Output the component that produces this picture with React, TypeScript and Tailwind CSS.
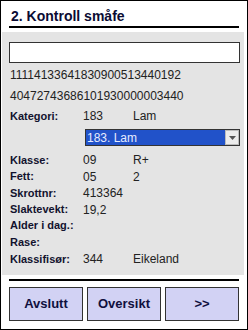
import React from 'react';

const rows = [
  { label: 'Klasse:', a: '09', b: 'R+' },
  { label: 'Fett:', a: '05', b: '2' },
  { label: 'Skrottnr:', a: '413364', b: '' },
  { label: 'Slaktevekt:', a: '19,2', b: '' },
  { label: 'Alder i dag.:', a: '', b: '' },
  { label: 'Rase:', a: '', b: '' },
  { label: 'Klassifisør:', a: '344', b: 'Eikeland' },
];

const Row = ({ label, a, b }: { label: string; a: string; b: string }) => (
  <div className="grid grid-cols-[73px_50px_1fr] h-[16.5px] items-center">
    <span className="text-[11px] font-bold text-[#12122e]">{label}</span>
    <span className="text-[12px] text-[#222]">{a}</span>
    <span className="text-[12px] text-[#222]">{b}</span>
  </div>
);

export default function App() {
  return (
    <div
      className="w-[248px] h-[330px] bg-white border border-black flex flex-col overflow-hidden"
      style={{ fontFamily: '"Liberation Sans", Arial, sans-serif' }}
    >
      {/* header */}
      <div className="px-[8px]">
        <div className="h-[27px] border-b-2 border-black pl-[2px] pt-[7px]">
          <h1 className="text-[14px] leading-[17px] font-bold text-[#0b0b33]">2. Kontroll småfe</h1>
        </div>
      </div>

      {/* form area */}
      <div className="mt-[4px] ml-[1px] mr-[3px] h-[243px] bg-[#e4e4e4] pl-[7px] pr-[4px] pt-[10px]">
        <div className="w-[231px] h-[21px] bg-white border border-[#333]" />
        <div className="pl-[1px] h-[21px] flex items-center text-[12px] text-[#222] mt-[1px]">
          11114133641830900513440192
        </div>
        <div className="pl-[1px] h-[22px] flex items-center text-[12px] text-[#222]">
          40472743686101930000003440
        </div>
        <div className="pl-[1px] grid grid-cols-[73px_50px_1fr] h-[18px] items-center">
          <span className="text-[11px] font-bold text-[#12122e]">Kategori:</span>
          <span className="text-[12px] text-[#222]">183</span>
          <span className="text-[12px] text-[#222]">Lam</span>
        </div>
        <div className="mt-[4px] ml-[76px] w-[155px] h-[17px] border border-[#333] bg-[#2152c9] flex items-center">
          <span className="flex-1 pl-[1px] text-[12px] leading-none text-[#e6ecff]">183. Lam</span>
          <div className="w-[14px] h-[15px] bg-[#ececec] border border-[#bbb] flex items-center justify-center">
            <svg width="7" height="4" viewBox="0 0 7 4">
              <path d="M0 0h7L3.5 4z" fill="#555" />
            </svg>
          </div>
        </div>
        <div className="pl-[1px] mt-[5px]">
          {rows.map((r) => (
            <Row key={r.label} {...r} />
          ))}
        </div>
      </div>

      {/* footer */}
      <div className="px-[8px] mt-[4px]">
        <div className="border-t-2 border-black" />
        <div className="mt-[6px] flex gap-[4px]">
          {['Avslutt', 'Oversikt', '>>'].map((t) => (
            <button
              key={t}
              className="flex-1 h-[34px] bg-[#d2d2f4] border border-[#333] text-[13px] font-bold text-[#10103e]"
            >
              {t}
            </button>
          ))}
        </div>
      </div>
    </div>
  );
}
